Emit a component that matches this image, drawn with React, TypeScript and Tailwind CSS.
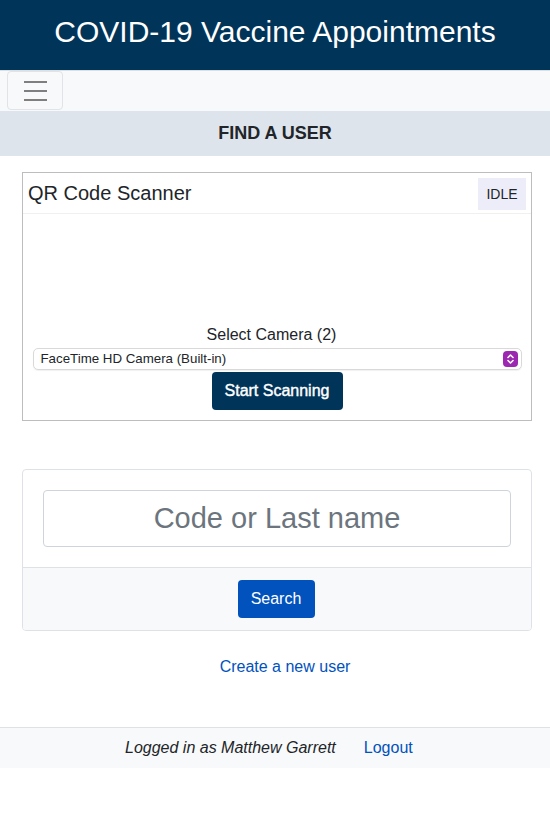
import React from "react";

export default function App() {
	return (
		<div className="min-h-[817px] bg-white text-[#212529]" style={{ fontFamily: '"Liberation Sans", Arial, sans-serif' }}>
			{/* Title bar */}
			<header className="h-[70px] bg-[#013459] flex items-center justify-center">
				<h1 className="text-[30px] text-white leading-none -mt-[6px]">COVID-19 Vaccine Appointments</h1>
			</header>

			{/* Nav */}
			<nav className="h-[41px] bg-[#f8f9fa] border-t border-[#dde0e3] flex items-start pl-[7px]">
				<button className="w-[56px] h-[39px] border border-[#e1e3e6] rounded-[4px] flex flex-col items-center justify-center gap-[7px]">
					<span className="block w-[23px] h-[2px] bg-[#7f7f7f]" />
					<span className="block w-[23px] h-[2px] bg-[#7f7f7f]" />
					<span className="block w-[23px] h-[2px] bg-[#7f7f7f]" />
				</button>
			</nav>

			{/* Section header */}
			<div className="h-[45px] bg-[#dee4ec] flex items-center justify-center">
				<span className="font-bold text-[18px] text-[#212529]">FIND A USER</span>
			</div>

			{/* QR scanner */}
			<div className="mt-4 ml-[22px] w-[510px] h-[249px] border border-[#bdbdbd] flex flex-col">
				<div className="flex items-start justify-between pl-[5px] pr-[5px] pt-[5px] h-[41px] border-b border-[#f0f0f0]">
					<span className="text-[20px] leading-none mt-[5px]">QR Code Scanner</span>
					<span className="w-[48px] h-[32px] bg-[#ededfa] text-[14px] flex items-center justify-center">IDLE</span>
				</div>
				<div className="flex-1 flex flex-col items-center justify-end pb-[10px]">
					<span className="text-[16px] leading-none mb-[5px] pr-[11px]">Select Camera (2)</span>
					<div className="w-[489px] h-[22px] border border-[#d9d9d9] rounded-[5px] shadow-[0_1px_1px_rgba(0,0,0,0.06)] flex items-center justify-between pl-[7px] pr-[3px]">
						<span className="text-[13.3px]">FaceTime HD Camera (Built-in)</span>
						<span className="w-[15px] h-[16px] rounded-[4px] bg-[#9c27b0] flex items-center justify-center">
							<svg width="9" height="12" viewBox="0 0 9 12" fill="none" stroke="white" strokeWidth="1.6" strokeLinecap="round" strokeLinejoin="round">
								<path d="M2 4.5 L4.5 2 L7 4.5" />
								<path d="M2 7.5 L4.5 10 L7 7.5" />
							</svg>
						</span>
					</div>
					<button className="mt-[2px] w-[131px] h-[38px] bg-[#013459] text-white text-[16px] rounded-[4px] [-webkit-text-stroke:0.4px_white]">Start Scanning</button>
				</div>
			</div>

			{/* Search card */}
			<div className="mt-[48px] ml-[22px] w-[510px] border border-[#dee2e6] rounded-[4px] overflow-hidden">
				<div className="p-5">
					<input
						className="w-full h-[57px] border border-[#ced4da] rounded-[4px] text-center text-[29px] placeholder:text-[#6c757d] outline-none"
						placeholder="Code or Last name"
					/>
				</div>
				<div className="h-[63px] bg-[#f8f9fa] border-t border-[#dee2e6] flex items-center justify-center pr-[2px]">
					<button className="w-[77px] h-[38px] bg-[#0152bd] text-white text-[16px] rounded-[4px]">Search</button>
				</div>
			</div>

			{/* Link */}
			<div className="mt-[24px] flex justify-center pl-[20px]">
				<a href="#" className="text-[16px] text-[#0152bd]">Create a new user</a>
			</div>

			{/* Footer */}
			<footer className="mt-[48px] h-[41px] bg-[#f8f9fa] border-t border-[#dee2e6] flex items-center pl-[125px]">
				<span className="italic text-[16px]">Logged in as Matthew Garrett</span>
				<a href="#" className="ml-[28px] text-[16px] text-[#0152bd]">Logout</a>
			</footer>
		</div>
	);
}
